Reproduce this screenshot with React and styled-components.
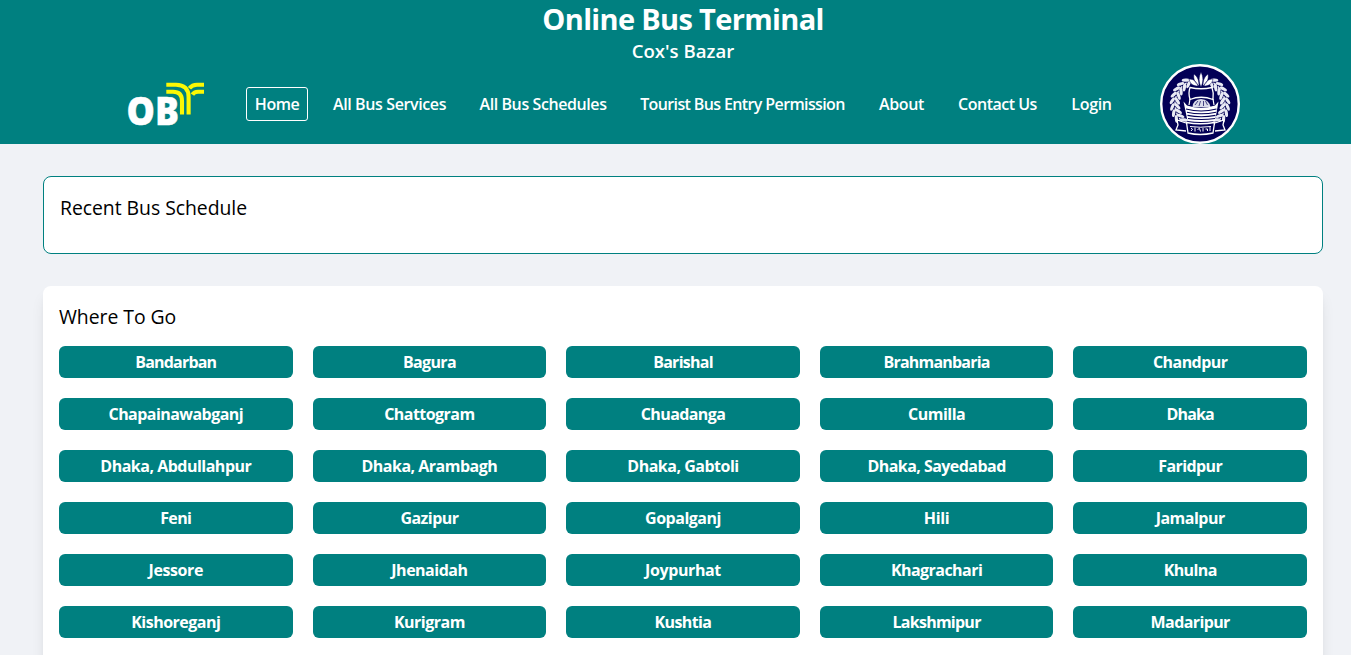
import React from 'react';
import styled, { createGlobalStyle } from 'styled-components';

const teal = '#008080';
const navy = '#030056';

const GlobalStyle = createGlobalStyle`
  *, *::before, *::after { box-sizing: border-box; }
  html, body { margin: 0; overflow: hidden; }
  body {
    height: 655px;
    background: #f0f2f6;
    color: #000;
    font-family: "Open Sans", "Noto Sans", sans-serif;
    font-size: 16px;
    line-height: 24px;
  }
`;

const Page = styled.div`
  width: 1366px;
`;

const Header = styled.header`
  height: 144px;
  background: ${teal};
  color: #fff;
  text-align: center;
`;

const Title = styled.h1`
  margin: 0;
  height: 40px;
  font-size: 29px;
  line-height: 37px;
  font-weight: 700;
  letter-spacing: -0.66px;
`;

const Subtitle = styled.p`
  margin: 0;
  height: 24px;
  font-size: 18.6px;
  line-height: 22px;
  font-weight: 600;
`;

const NavBar = styled.div`
  height: 80px;
  padding: 0 126px 0 124px;
  display: flex;
  align-items: center;
  justify-content: space-between;
`;

const Nav = styled.nav`
  display: flex;
  gap: 16px;
  margin-right: 1px;
`;

const NavLink = styled.a`
  width: ${(p) => p.$width}px;
  height: 34px;
  border: 1px solid ${(p) => (p.$active ? '#fff' : 'transparent')};
  border-radius: 3px;
  line-height: 33px;
  font-weight: 600;
  white-space: nowrap;
  letter-spacing: ${(p) => p.$tracking}px;
`;

const Main = styled.main`
  width: 1280px;
  margin: 32px auto 0;
  display: flex;
  flex-direction: column;
  gap: 32px;
`;

const ScheduleCard = styled.section`
  height: 78px;
  padding: 16px;
  border: 1px solid ${teal};
  border-radius: 8px;
  background: #fff;
`;

const PlacesCard = styled.section`
  padding: 16px 16px 40px;
  border-radius: 8px;
  background: #fff;
  box-shadow: 0 10px 15px -3px rgba(0, 0, 0, 0.1), 0 4px 6px -4px rgba(0, 0, 0, 0.1);
`;

const Heading = styled.h2`
  margin: 0;
  height: 28px;
  font-size: 19.4px;
  line-height: 29px;
  font-weight: 400;
  letter-spacing: -0.04px;
`;

const PlaceGrid = styled.div`
  margin-top: 16px;
  display: grid;
  grid-template-columns: repeat(5, 1fr);
  gap: 20px;
`;

const Place = styled.button`
  height: 32px;
  padding: 0;
  border: 0;
  border-radius: 6px;
  background: ${teal};
  color: #fff;
  font: 700 16px/32px "Open Sans", "Noto Sans", sans-serif;
  letter-spacing: ${(p) => p.$tracking}px;
`;

const LogoLetters = styled.text`
  font-family: "Open Sans", sans-serif;
  font-weight: 800;
  font-size: 39px;
  fill: #fff;
  stroke: #fff;
  stroke-width: 0.4px;
`;

function Logo() {
  return (
    <svg width="84" height="72" viewBox="0 -10 84 72" role="img" aria-label="OBT">
      <LogoLetters x="2.6" y="46.9" textLength="52.4" lengthAdjust="spacingAndGlyphs">OB</LogoLetters>
      <g fill="none" stroke="#fcf804" strokeWidth="4.1">
        <path d="M42.3 6.7H52C60 6.7 64.6 11 64.6 19V36.4" />
        <path d="M42.3 13.8H49C55 13.8 58 17 58 23V36.4" />
        <path d="M65.4 10.2C67.3 7.8 69.6 6.7 73 6.7H80" />
        <path d="M68.4 16.6C69.6 14.6 71.2 13.8 74 13.8H80" />
      </g>
    </svg>
  );
}

// Leaf angles (degrees from straight down) along each arm of the wreath.
const leafAngles = [40, 53, 66, 79, 92, 105, 118, 131, 144];

function Wreath() {
  return leafAngles.map((a) => (
    <g key={a} transform={`rotate(${a} 40 40) translate(40 65)`}>
      <ellipse cx="-0.5" cy="3.6" rx="3.9" ry="1.6" transform="rotate(32)" />
      <ellipse cx="-0.5" cy="-3.2" rx="3.9" ry="1.6" transform="rotate(-32)" />
      <ellipse cx="0.5" cy="0" rx="2.4" ry="0.8" />
    </g>
  ));
}

function Emblem() {
  return (
    <svg width="80" height="80" viewBox="0 0 80 80" role="img" aria-label="Police emblem">
      <circle cx="40" cy="40" r="38.8" fill={navy} stroke="#fff" strokeWidth="2.4" />
      <g fill="#e9eaf4">
        <Wreath />
        <g transform="translate(80 0) scale(-1 1)"><Wreath /></g>
      </g>
      <path d="M41 8c2.5 5 2.5 10 0 15-2.500-5-2.500-10 0-15zM34 10c4 3 5 7 5 12-4-3-6-7-5-12zM48 10c-4 3-5 7-5 12 4-3 6-7 5-12zM29 15c5 0 8 3 9 7-5 0-8-2-9-7zM53 15c-5 0-8 3-9 7 5 0 8-2 9-7z" fill="#fff" stroke={navy} strokeWidth=".5" />
      <path d="M30 23.500Q41 26 52 23.500Q54 29 53 35.500Q41 31 30 35.500Q28 29 30 23.500z" fill={navy} stroke="#fff" strokeWidth="1.3" />
      <path d="M30 35l-1 6M53 35l1 6" stroke="#fff" strokeWidth="1.2" />
      <path d="M32.500 43Q33 35.500 41 35Q49 35.500 50.500 43z" fill="#d9dbea" />
      <path d="M35 41l3-4M39 42l1.500-5M43.500 42v-5M47.500 41l-2-4" stroke={navy} strokeWidth=".7" />
      <path d="M23.500 37.500L27 41.500Q41 46 55 41.500L58.500 37.500L55 57Q41 59 27.500 57z" fill="#fff" />
      <path d="M26 45Q41 49 56.500 45M27 48.200Q41 51.300 56 48.200M27.500 51.400Q41 54 55.500 51.400M28 54.500Q41 56.600 55 54.500" fill="none" stroke={navy} strokeWidth="1.1" />
      <path d="M26 59l-9-3 1 5-2 5 10 1M55 59l9-3-1 5 2 5-10 1M26.500 58.500Q40 61 54.500 58.500L53 69Q40 72 28 69z" fill={navy} stroke="#fff" strokeWidth="1.3" />
      <path d="M30 62.500Q40 64 51 62.500M31 64q3 1 0 3M35 63.500v4M37.500 65.500l2-1 1 3M43 64v3.500M45.500 65l2 0 0 2M50 63v4" fill="none" stroke="#fff" strokeWidth="1" />
    </svg>
  );
}

const links = [
  ['Home', 62, -0.5],
  ['All Bus Services', 131, -0.38],
  ['All Bus Schedules', 144, -0.41],
  ['Tourist Bus Entry Permission', 223, -0.62],
  ['About', 63, -0.4],
  ['Contact Us', 97, -0.5],
  ['Login', 59, -0.3],
];

const places = [
  ['Bandarban', -0.8], ['Bagura', -0.65], ['Barishal', -0.75], ['Brahmanbaria', -0.8], ['Chandpur', -0.55],
  ['Chapainawabganj', -0.55], ['Chattogram', -0.55], ['Chuadanga', -0.6], ['Cumilla', -0.5], ['Dhaka', -0.8],
  ['Dhaka, Abdullahpur', -0.5], ['Dhaka, Arambagh', -0.5], ['Dhaka, Gabtoli', -0.5], ['Dhaka, Sayedabad', -0.55], ['Faridpur', -0.6],
  ['Feni', -0.6], ['Gazipur', -0.55], ['Gopalganj', -0.5], ['Hili', -0.35], ['Jamalpur', -0.5],
  ['Jessore', -0.4], ['Jhenaidah', -0.5], ['Joypurhat', -0.4], ['Khagrachari', -0.55], ['Khulna', -0.6],
  ['Kishoreganj', -0.5], ['Kurigram', -0.5], ['Kushtia', -0.6], ['Lakshmipur', -0.75], ['Madaripur', -0.6],
];

export default function App() {
  return (
    <Page>
      <GlobalStyle />
      <Header>
        <Title>Online Bus Terminal</Title>
        <Subtitle>Cox's Bazar</Subtitle>
        <NavBar>
          <Logo />
          <Nav>
            {links.map(([label, width, tracking], i) => (
              <NavLink key={label} $width={width} $tracking={tracking} $active={i === 0}>{label}</NavLink>
            ))}
          </Nav>
          <Emblem />
        </NavBar>
      </Header>
      <Main>
        <ScheduleCard><Heading>Recent Bus Schedule</Heading></ScheduleCard>
        <PlacesCard>
          <Heading>Where To Go</Heading>
          <PlaceGrid>
            {places.map(([name, tracking]) => (
              <Place key={name} $tracking={tracking}>{name}</Place>
            ))}
          </PlaceGrid>
        </PlacesCard>
      </Main>
    </Page>
  );
}
